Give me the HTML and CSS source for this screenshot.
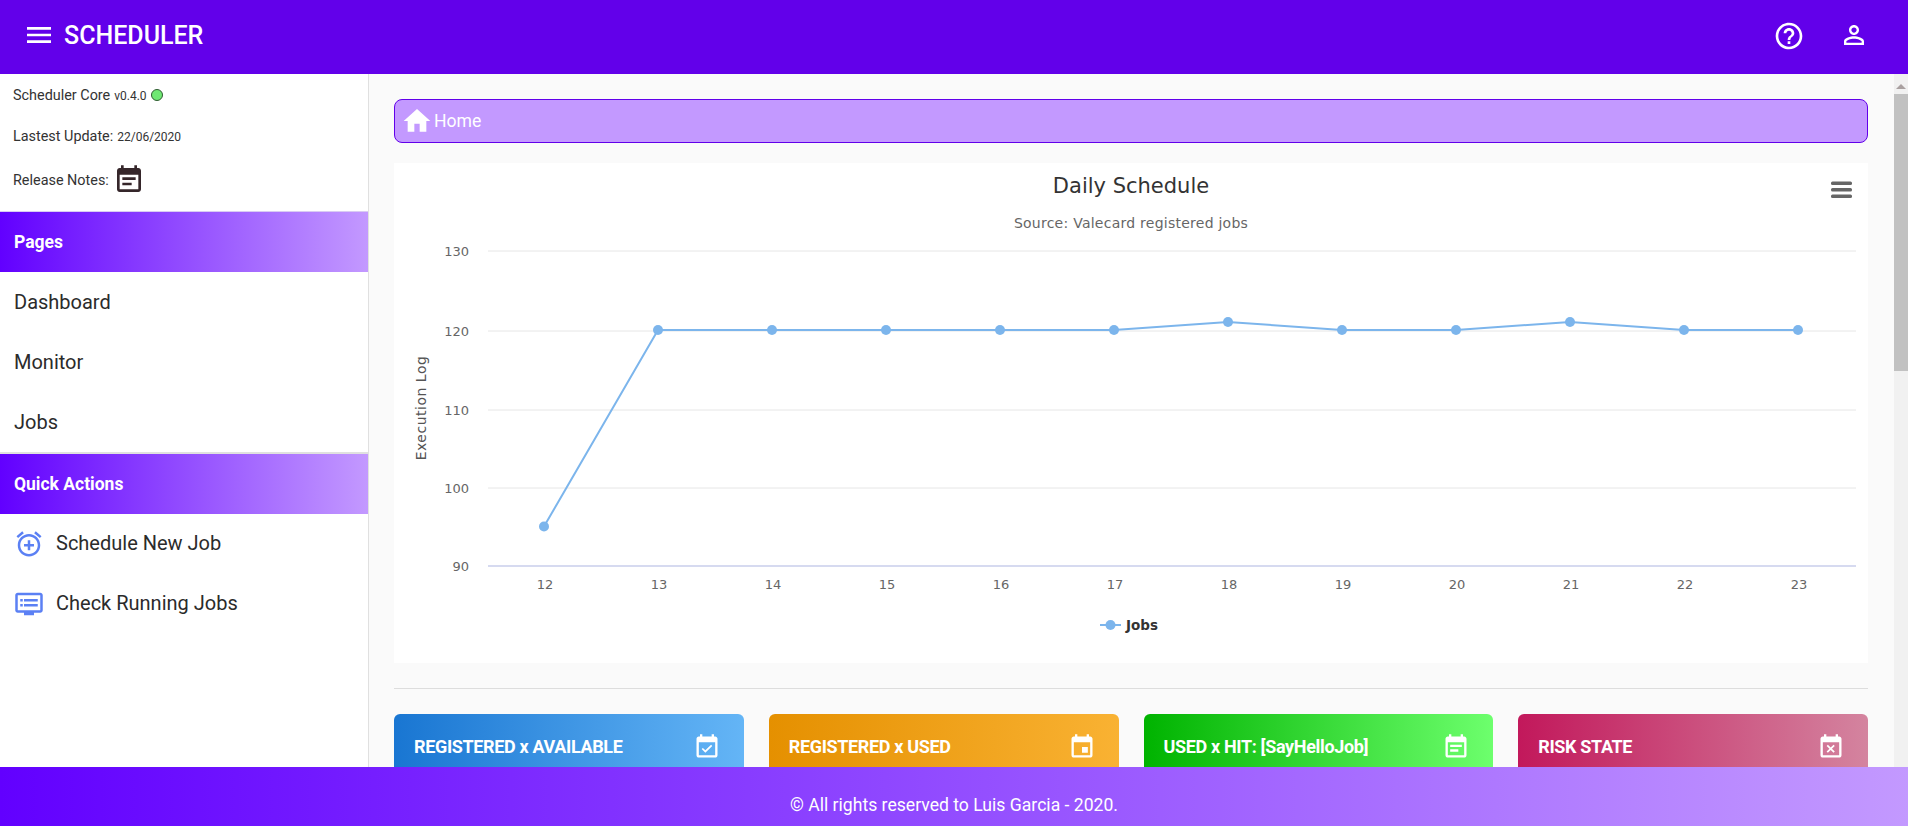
FILE: index.html
```html
<!DOCTYPE html>
<html lang="en">
<head>
  <meta charset="UTF-8">
  <link rel="stylesheet" href="styles.css">
  <title>Scheduler</title>
</head>
<body>
  <header class="topbar">
    <div class="brand">
      <svg class="ico-menu" viewBox="0 0 24 24"><path d="M3 18h18v-2H3v2zm0-5h18v-2H3v2zm0-7v2h18V6H3z"/></svg>
      <span class="brand-name">SCHEDULER</span>
    </div>
    <div class="top-actions">
      <svg class="ico-help" viewBox="0 0 24 24"><path d="M11 18h2v-2h-2v2zm1-16C6.48 2 2 6.48 2 12s4.48 10 10 10 10-4.48 10-10S17.52 2 12 2zm0 18c-4.41 0-8-3.59-8-8s3.59-8 8-8 8 3.59 8 8-3.59 8-8 8zm0-14c-2.21 0-4 1.79-4 4h2c0-1.1.9-2 2-2s2 .9 2 2c0 2-3 1.75-3 5h2c0-2.25 3-2.5 3-5 0-2.21-1.79-4-4-4z"/></svg>
      <svg class="ico-user" viewBox="0 0 24 24"><path d="M12 5.9c1.16 0 2.1.94 2.1 2.1s-.94 2.1-2.1 2.1S9.9 9.16 9.9 8s.94-2.1 2.1-2.1m0 9c2.97 0 6.1 1.46 6.1 2.1v1.1H5.9V17c0-.64 3.13-2.1 6.1-2.1M12 4C9.79 4 8 5.79 8 8s1.79 4 4 4 4-1.79 4-4-1.79-4-4-4zm0 9c-2.67 0-8 1.34-8 4v3h16v-3c0-2.66-5.33-4-8-4z"/></svg>
    </div>
  </header>

  <div class="middle">
    <aside class="sidebar">
      <div class="info">
        <p class="info-row">Scheduler Core <small>v0.4.0</small> <span class="status-dot"></span></p>
        <p class="info-row">Lastest Update: <small>22/06/2020</small></p>
        <p class="info-row info-row-tall">Release Notes:
          <svg class="ico-notes" viewBox="0 0 24 24"><path d="M17 10H7v2h10v-2zm2-7h-1V1h-2v2H8V1H6v2H5c-1.11 0-1.99.9-1.99 2L3 19c0 1.1.89 2 2 2h14c1.1 0 2-.9 2-2V5c0-1.1-.9-2-2-2zm0 16H5V8h14v11zm-5-5H7v2h7v-2z"/></svg>
        </p>
      </div>
      <div class="band">Pages</div>
      <nav class="nav">
        <a class="nav-item">Dashboard</a>
        <a class="nav-item">Monitor</a>
        <a class="nav-item">Jobs</a>
      </nav>
      <div class="band band-quick">Quick Actions</div>
      <nav class="nav">
        <a class="nav-item nav-action">
          <svg class="ico-action" viewBox="0 0 24 24"><path d="M7.88 3.39L6.6 1.86 2 5.71l1.29 1.53 4.59-3.85zM22 5.72l-4.6-3.86-1.29 1.53 4.6 3.86L22 5.72zM12 4c-4.97 0-9 4.03-9 9s4.02 9 9 9c4.97 0 9-4.03 9-9s-4.03-9-9-9zm0 16c-3.87 0-7-3.13-7-7s3.13-7 7-7 7 3.13 7 7-3.13 7-7 7zm1-11h-2v3H8v2h3v3h2v-3h3v-2h-3V9z"/></svg>
          <span class="nav-label">Schedule New Job</span>
        </a>
        <a class="nav-item nav-action">
          <svg class="ico-action" viewBox="0 0 24 24"><path d="M21 3H3c-1.1 0-2 .9-2 2v12c0 1.1.9 2 2 2h5v2h8v-2h5c1.1 0 1.99-.9 1.99-2L23 5c0-1.1-.9-2-2-2zm0 14H3V5h18v12zm-2-9H8v2h11V8zm0 4H8v2h11v-2zM7 8H5v2h2V8zm0 4H5v2h2v-2z"/></svg>
          <span class="nav-label">Check Running Jobs</span>
        </a>
      </nav>
    </aside>

    <main class="content">
      <div class="crumb">
        <svg class="ico-home" viewBox="0 0 24 24"><path d="M10 20v-6h4v6h5v-8h3L12 3 2 12h3v8z"/></svg>
        <span>Home</span>
      </div>

      <section class="chart">
        <svg class="chart-svg" viewBox="0 0 1474 500" width="1474" height="500">
          <text class="c-title" x="737" y="30" text-anchor="middle">Daily Schedule</text>
          <text class="c-sub" x="737" y="65" text-anchor="middle">Source: Valecard registered jobs</text>
          <g class="c-burger">
            <rect x="1437" y="18.500" width="21" height="3.500" rx="1.500"/>
            <rect x="1437" y="25" width="21" height="3.500" rx="1.500"/>
            <rect x="1437" y="31.500" width="21" height="3.500" rx="1.500"/>
          </g>
          <g class="c-grid">
            <line x1="94" x2="1462" y1="88" y2="88"/>
            <line x1="94" x2="1462" y1="168" y2="168"/>
            <line x1="94" x2="1462" y1="247" y2="247"/>
            <line x1="94" x2="1462" y1="325" y2="325"/>
          </g>
          <line class="c-axis" x1="94" x2="1462" y1="403" y2="403"/>
          <g class="c-ylab">
            <text x="75" y="93" text-anchor="end">130</text>
            <text x="75" y="173" text-anchor="end">120</text>
            <text x="75" y="252" text-anchor="end">110</text>
            <text x="75" y="330" text-anchor="end">100</text>
            <text x="75" y="408" text-anchor="end">90</text>
          </g>
          <text class="c-ytitle" transform="translate(32 245) rotate(-90)" text-anchor="middle">Execution Log</text>
          <polyline class="c-line" points="150,363.500 264,167 378,167 492,167 606,167 720,167 834,159 948,167 1062,167 1176,159 1290,167 1404,167"/>
          <g class="c-dots">
            <circle cx="150" cy="363.500" r="5"/><circle cx="264" cy="167" r="5"/><circle cx="378" cy="167" r="5"/>
            <circle cx="492" cy="167" r="5"/><circle cx="606" cy="167" r="5"/><circle cx="720" cy="167" r="5"/>
            <circle cx="834" cy="159" r="5"/><circle cx="948" cy="167" r="5"/><circle cx="1062" cy="167" r="5"/>
            <circle cx="1176" cy="159" r="5"/><circle cx="1290" cy="167" r="5"/><circle cx="1404" cy="167" r="5"/>
          </g>
          <g class="c-xlab" text-anchor="middle">
            <text x="151" y="426">12</text><text x="265" y="426">13</text><text x="379" y="426">14</text>
            <text x="493" y="426">15</text><text x="607" y="426">16</text><text x="721" y="426">17</text>
            <text x="835" y="426">18</text><text x="949" y="426">19</text><text x="1063" y="426">20</text>
            <text x="1177" y="426">21</text><text x="1291" y="426">22</text><text x="1405" y="426">23</text>
          </g>
          <line class="c-line" x1="706" x2="727" y1="462" y2="462"/>
          <circle class="c-legend-dot" cx="716.500" cy="462" r="5"/>
          <text class="c-legend" x="732" y="467">Jobs</text>
        </svg>
      </section>

      <hr class="divider">

      <section class="cards">
        <article class="card card-blue">
          <h3 class="card-title">REGISTERED x AVAILABLE</h3>
          <svg class="ico-card" viewBox="0 0 24 24"><path d="M16.53 11.06L15.47 10l-4.88 4.88-2.12-2.12-1.06 1.06L10.59 17l5.94-5.94zM19 3h-1V1h-2v2H8V1H6v2H5c-1.11 0-1.99.9-1.99 2L3 19c0 1.1.89 2 2 2h14c1.1 0 2-.9 2-2V5c0-1.1-.9-2-2-2zm0 16H5V8h14v11z"/></svg>
        </article>
        <article class="card card-orange">
          <h3 class="card-title">REGISTERED x USED</h3>
          <svg class="ico-card" viewBox="0 0 24 24"><path d="M17 12h-5v5h5v-5zM16 1v2H8V1H6v2H5c-1.11 0-1.99.9-1.99 2L3 19c0 1.1.89 2 2 2h14c1.1 0 2-.9 2-2V5c0-1.1-.9-2-2-2h-1V1h-2zm3 18H5V8h14v11z"/></svg>
        </article>
        <article class="card card-green">
          <h3 class="card-title">USED x HIT: [SayHelloJob]</h3>
          <svg class="ico-card" viewBox="0 0 24 24"><path d="M17 10H7v2h10v-2zm2-7h-1V1h-2v2H8V1H6v2H5c-1.11 0-1.99.9-1.99 2L3 19c0 1.1.89 2 2 2h14c1.1 0 2-.9 2-2V5c0-1.1-.9-2-2-2zm0 16H5V8h14v11zm-5-5H7v2h7v-2z"/></svg>
        </article>
        <article class="card card-pink">
          <h3 class="card-title">RISK STATE</h3>
          <svg class="ico-card" viewBox="0 0 24 24"><path d="M9.31 17l2.44-2.44L14.19 17l1.06-1.06-2.44-2.44 2.44-2.44L14.19 10l-2.44 2.44L9.31 10l-1.06 1.06 2.44 2.44-2.44 2.44L9.31 17zM19 3h-1V1h-2v2H8V1H6v2H5c-1.11 0-1.99.9-1.99 2L3 19c0 1.1.89 2 2 2h14c1.1 0 2-.9 2-2V5c0-1.1-.9-2-2-2zm0 16H5V8h14v11z"/></svg>
        </article>
      </section>
    </main>

    <div class="scrollbar">
      <span class="scroll-up"></span>
      <span class="scroll-thumb"></span>
    </div>
  </div>

  <footer class="footer">© All rights reserved to Luis Garcia - 2020.</footer>
</body>
</html>
```

FILE: styles.css
```css
* { margin: 0; padding: 0; box-sizing: border-box; }

html, body { height: 100%; }

body {
  display: flex;
  flex-direction: column;
  overflow: hidden;
  font-family: Roboto, "Liberation Sans", sans-serif;
  color: #212121;
  background: #fafafa;
}

svg { display: block; fill: currentColor; flex: none; }

/* top bar */
.topbar {
  flex: none;
  height: 74px;
  display: flex;
  align-items: center;
  justify-content: space-between;
  padding: 0 39px 4px 23px;
  background: #6200ea;
  color: #fff;
}
.brand { display: flex; align-items: center; gap: 9px; }
.ico-menu { width: 32px; height: 32px; }
.brand-name { font-size: 25px; font-weight: 500; }
.top-actions { display: flex; align-items: center; gap: 34px; }
.ico-help { width: 32px; height: 32px; margin-top: 2px; }
.ico-user { width: 30px; height: 30px; }

/* middle */
.middle { flex: 1; min-height: 0; display: flex; }

.sidebar {
  flex: none;
  width: 369px;
  background: #fff;
  border-right: 1px solid #e0e0e0;
}
.info { height: 137px; padding: 1px 13px 0; }
.info-row {
  height: 41px;
  display: flex;
  align-items: center;
  gap: 4px;
  font-size: 14.400px;
  color: #333;
}
.info-row-tall { height: 46px; }
.info-row small { font-size: 12px; }
.status-dot {
  width: 12px;
  height: 12px;
  border-radius: 50%;
  border: 1px solid #2e5a30;
  background: #6fe873;
  margin-bottom: 2px;
}
.ico-notes { width: 32px; height: 32px; color: #35262a; }

.band {
  height: 61px;
  display: flex;
  align-items: center;
  padding-left: 14px;
  font-size: 17.500px;
  font-weight: 700;
  color: #fff;
  background: linear-gradient(to right, #6200ff, #c399ff);
  border-top: 1px solid #d9ccf2;
}
.band-quick { border-top: 2px solid #e0e0e0; height: 62px; }

.nav-item {
  height: 60px;
  display: flex;
  align-items: center;
  padding-left: 14px;
  font-size: 20px;
  color: #2b2b2b;
}
.nav-action { gap: 12px; }
.nav-label { margin-top: -2px; }
.ico-action { width: 30px; height: 30px; color: #5b80f4; }

/* content */
.content {
  flex: 1;
  min-width: 0;
  overflow: hidden;
  padding: 25px 25px 0;
  background: #fafafa;
}
.crumb {
  height: 44px;
  display: flex;
  align-items: center;
  gap: 1px;
  padding-left: 6px;
  font-size: 17.600px;
  color: #fff;
  background: #c399ff;
  border: 1px solid #6200ea;
  border-radius: 8px;
}
.ico-home { width: 32px; height: 32px; }

.chart { margin-top: 20px; height: 500px; background: #fff; }
.chart-svg { font-family: "DejaVu Sans", sans-serif; }
.c-title { font-size: 21px; fill: #333; }
.c-sub { font-size: 14px; letter-spacing: .25px; fill: #666; }
.c-burger rect { fill: #666; }
.c-grid line { stroke: #e6e6e6; stroke-width: 1; }
.c-axis { stroke: #d6daf0; stroke-width: 2; }
.c-ylab text, .c-xlab text { font-size: 13px; fill: #666; }
.c-ytitle { font-size: 14px; letter-spacing: .5px; fill: #555; }
.c-line { fill: none; stroke: #7cb5ec; stroke-width: 2; }
.c-dots circle, .c-legend-dot { fill: #7cb5ec; }
.c-legend { font-size: 13.500px; font-weight: 700; fill: #333; }

.divider { border: 0; border-top: 1px solid #ddd; margin-top: 25px; }

.cards {
  display: grid;
  grid-template-columns: repeat(4, 1fr);
  gap: 25px;
  margin-top: 25px;
}
.card {
  height: 130px;
  display: flex;
  align-items: flex-start;
  justify-content: space-between;
  padding: 20px 23px 0 20px;
  border-radius: 6px;
  color: #fff;
}
.card-title { font-size: 18px; font-weight: 700; letter-spacing: -.35px; line-height: 26px; }
.ico-card { width: 28px; height: 28px; margin-top: -1px; }
.card-blue { background: linear-gradient(to right, #1976d2, #64b5f6); }
.card-orange { background: linear-gradient(to right, #e59000, #f9b233); }
.card-green { background: linear-gradient(to right, #00b300, #6dff6d); }
.card-pink { background: linear-gradient(to right, #c2185b, #d4849f); }

/* drawn scrollbar */
.scrollbar {
  flex: none;
  width: 15px;
  display: flex;
  flex-direction: column;
  align-items: center;
  background: #f1f1f1;
  border-left: 1px solid #fafafa;
}
.scroll-up {
  margin-top: 10px;
  border-left: 5px solid transparent;
  border-right: 5px solid transparent;
  border-bottom: 5px solid #a9a0a0;
}
.scroll-thumb { width: 100%; height: 277px; margin-top: 5px; background: #c1c1c1; }

/* footer */
.footer {
  flex: none;
  height: 59px;
  display: flex;
  align-items: center;
  justify-content: center;
  padding-top: 17px;
  font-size: 17.600px;
  color: #fff;
  background: linear-gradient(to right, #6200ff, #c399ff);
}
```
